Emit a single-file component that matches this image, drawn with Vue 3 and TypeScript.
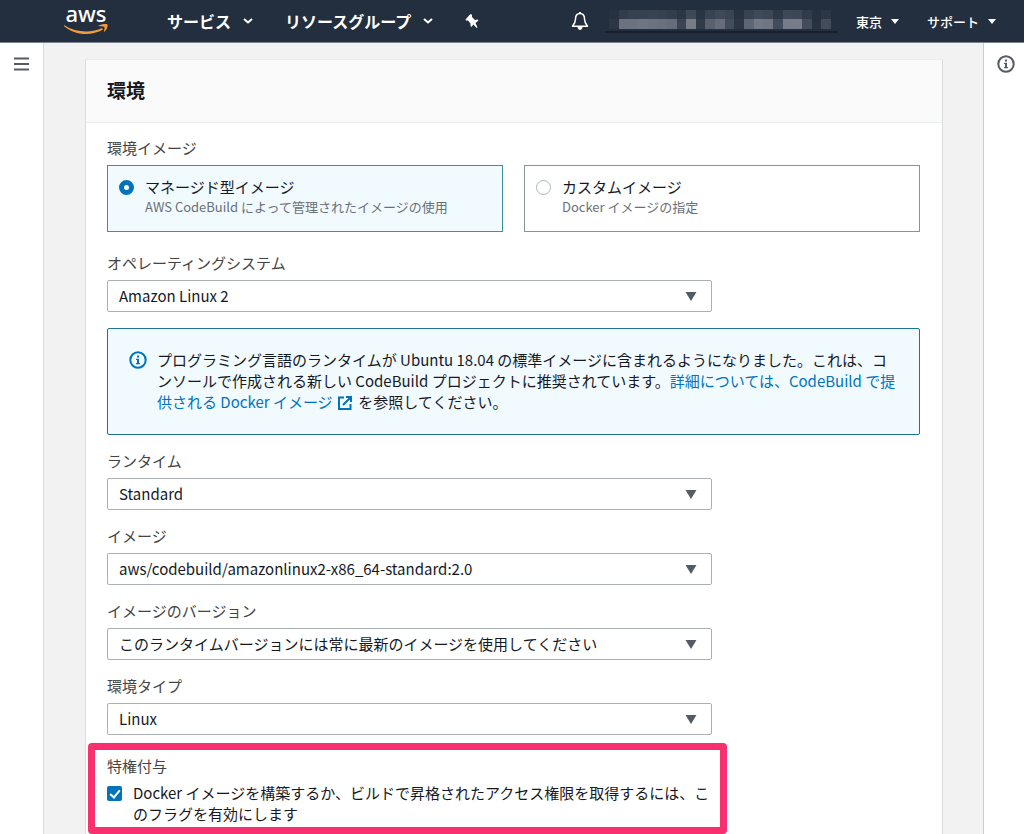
<script setup lang="ts">
import { ref } from 'vue'

interface Field {
  id: string
  label: string
  value: string
}

const imageKind = ref<string>('managed')
const privileged = ref<boolean>(true)

const osField: Field = { id: 'os', label: 'オペレーティングシステム', value: 'Amazon Linux 2' }

const fields: Field[] = [
  { id: 'runtime', label: 'ランタイム', value: 'Standard' },
  { id: 'image', label: 'イメージ', value: 'aws/codebuild/amazonlinux2-x86_64-standard:2.0' },
  {
    id: 'image-version',
    label: 'イメージのバージョン',
    value: 'このランタイムバージョンには常に最新のイメージを使用してください',
  },
  { id: 'env-type', label: '環境タイプ', value: 'Linux' },
]

// Pixelated account name: one shade per cell, two rows.
const maskTop: string[] = [
  '#27313f', '#323d4c', '#36404f', '#37414f', '#384251', '#36404f', '#333e4d', '#2c3645',
  '#3f4857', '#2a3443', '#384251', '#3f4857', '#3a4453', '#283241', '#384251', '#404958',
  '#3c4655', '#2e3847', '#3f4857', '#3c4655', '#303a49', '#253040', '#2c3645',
]
const maskBottom: string[] = [
  '#2c3645', '#6c727f', '#6c727f', '#6f7581', '#6c727f', '#6a707d', '#666c79', '#3a4453',
  '#777c88', '#303a49', '#59606e', '#666c79', '#434c5b', '#2c3645', '#5f6673', '#727884',
  '#6f7581', '#434c5b', '#777c88', '#777c88', '#434c5b', '#27313f', '#434c5b',
]
const maskCells: string[] = [...maskTop, ...maskBottom]
</script>

<template>
  <div class="page">
    <header class="topbar">
      <a class="logo" href="#" aria-label="aws">
        <svg width="46" height="42" viewBox="0 0 46 42">
          <text class="logo-text" x="23" y="22" text-anchor="middle">aws</text>
          <path d="M1 25 C13 33 29 33 39 28 L40 29.500 C29 36 12 36 1 26 Z" fill="#f59b38" />
          <path d="M35 26 C39 24 43 23.500 44.500 24.500 C45 27 43.500 30 41 32 C40.500 31.500 42 28 41.500 27 C40 26 37 26.800 35 26 Z" fill="#f59b38" />
        </svg>
      </a>
      <button class="nav services" type="button">
        サービス
        <svg class="chev" width="10" height="6" viewBox="0 0 10 6"><path d="M1 1 L5 4.500 L9 1" /></svg>
      </button>
      <button class="nav groups" type="button">
        リソースグループ
        <svg class="chev" width="10" height="6" viewBox="0 0 10 6"><path d="M1 1 L5 4.500 L9 1" /></svg>
      </button>
      <button class="icon-btn pin" type="button" aria-label="ピン">
        <svg width="14" height="16" viewBox="0 0 14 16">
          <path d="M6 1 L7 2 L7 4 L10 7 L12.500 6.500 L13.500 7.500 L10.500 10 L12.500 14.500 L11.800 15 L8.300 11.500 L6.500 14 L5.500 13 L5.500 10.500 L3 7.500 L1 7.500 L0.500 6.500 L5 1.500 Z" fill="#fff" />
        </svg>
      </button>
      <span class="spacer"></span>
      <button class="icon-btn bell" type="button" aria-label="通知">
        <svg width="18" height="20" viewBox="0 0 18 20">
          <path d="M9 2.500 C5.800 2.500 4.500 5 4.500 8 C4.500 11.500 3.500 13 1.500 15.200 H16.500 C14.500 13 13.500 11.500 13.500 8 C13.500 5 12.200 2.500 9 2.500 Z" fill="none" stroke="#fff" stroke-width="1.500" stroke-linejoin="round" />
          <path d="M9 1 V2.500" stroke="#fff" stroke-width="2" />
          <path d="M6.500 16 H11.500 C11 20 7 20 6.500 16 Z" fill="#fff" />
        </svg>
      </button>
      <button class="account" type="button" aria-label="アカウント">
        <span class="mask">
          <span v-for="(c, i) in maskCells" :key="i" :style="{ background: c }"></span>
        </span>
      </button>
      <button class="nav small region" type="button">
        東京
        <svg width="8" height="5" viewBox="0 0 8 5"><path d="M0 0 H8 L4 5 Z" fill="#fff" /></svg>
      </button>
      <button class="nav small" type="button">
        サポート
        <svg width="8" height="5" viewBox="0 0 8 5"><path d="M0 0 H8 L4 5 Z" fill="#fff" /></svg>
      </button>
    </header>

    <div class="shell">
      <aside class="rail left">
        <button class="icon-btn" type="button" aria-label="メニュー">
          <svg width="16" height="14" viewBox="0 0 16 14"><path d="M0 1.500 H15 M0 7 H15 M0 12.500 H15" stroke="#545b64" stroke-width="2" /></svg>
        </button>
      </aside>

      <main class="content">
        <section class="card">
          <h2 class="card-head">環境</h2>
          <div class="card-body">
            <div class="label">環境イメージ</div>
            <div class="tiles" role="radiogroup" aria-label="環境イメージ">
              <label class="tile" :class="{ selected: imageKind === 'managed' }">
                <input v-model="imageKind" class="radio" type="radio" name="kind" value="managed" />
                <span>
                  <span class="tile-title">マネージド型イメージ</span>
                  <span class="tile-desc">AWS CodeBuild によって管理されたイメージの使用</span>
                </span>
              </label>
              <label class="tile" :class="{ selected: imageKind === 'custom' }">
                <input v-model="imageKind" class="radio" type="radio" name="kind" value="custom" />
                <span>
                  <span class="tile-title">カスタムイメージ</span>
                  <span class="tile-desc">Docker イメージの指定</span>
                </span>
              </label>
            </div>

            <div class="field">
              <label class="label" :for="osField.id">{{ osField.label }}</label>
              <div class="select">
                <select :id="osField.id"><option>{{ osField.value }}</option></select>
                <svg class="caret" width="12" height="9" viewBox="0 0 12 9"><path d="M0.500 0 H11.500 L6 9 Z" fill="#545b64" /></svg>
              </div>
            </div>

            <div class="alert" role="note">
              <svg class="info" width="18" height="18" viewBox="0 0 18 18">
                <circle cx="9" cy="9" r="7.700" fill="none" stroke="#0073bb" stroke-width="2" />
                <path d="M8 4.500 H10 V6.500 H8 Z M7 7.700 H10 V12 H11 V13.300 H7 V12 H8 V9 H7 Z" fill="#0073bb" />
              </svg>
              <p>
                プログラミング言語のランタイムが Ubuntu 18.04 の標準イメージに含まれるようになりました。これは、コンソールで作成される新しい CodeBuild プロジェクトに推奨されています。<a href="#">詳細については、CodeBuild で提供される Docker イメージ
                  <svg class="ext" width="14" height="14" viewBox="0 0 14 14"><path d="M6 1.500 H1 V13 H12.500 V8 M8 1 H13 V6 M13 1 L5 9" fill="none" stroke="#0073bb" stroke-width="2" /></svg></a>
                を参照してください。
              </p>
            </div>

            <div v-for="f in fields" :key="f.id" class="field">
              <label class="label" :for="f.id">{{ f.label }}</label>
              <div class="select">
                <select :id="f.id"><option>{{ f.value }}</option></select>
                <svg class="caret" width="12" height="9" viewBox="0 0 12 9"><path d="M0.500 0 H11.500 L6 9 Z" fill="#545b64" /></svg>
              </div>
            </div>

            <div class="highlight">
              <div class="label">特権付与</div>
              <label class="check">
                <input v-model="privileged" class="box" type="checkbox" />
                <span>Docker イメージを構築するか、ビルドで昇格されたアクセス権限を取得するには、このフラグを有効にします</span>
              </label>
            </div>
          </div>
        </section>
      </main>

      <aside class="rail right">
        <button class="icon-btn" type="button" aria-label="情報">
          <svg width="18" height="18" viewBox="0 0 18 18">
            <circle cx="9" cy="9" r="7.700" fill="none" stroke="#545b64" stroke-width="2" />
            <path d="M8 4.500 H10 V6.500 H8 Z M7 7.700 H10 V12 H11 V13.300 H7 V12 H8 V9 H7 Z" fill="#545b64" />
          </svg>
        </button>
      </aside>
    </div>
  </div>
</template>

<style>
body {
  margin: 0;
  background: #f2f2f2;
}
</style>

<style scoped>
.page {
  height: 100vh;
  overflow: hidden;
  display: flex;
  flex-direction: column;
  background: #f2f2f2;
  color: #16191f;
  font-family: "Noto Sans CJK JP", sans-serif;
  font-size: 15px;
  line-height: 21px;
}
button,
select {
  font: inherit;
  color: inherit;
}
button {
  display: flex;
  align-items: center;
  padding: 0;
  border: 0;
  background: none;
}
.topbar {
  flex: none;
  display: flex;
  align-items: center;
  box-sizing: border-box;
  height: 43px;
  padding: 0 28px 0 63px;
  background: #232f3e;
  border-bottom: 1px solid #7d8391;
  color: #fff;
}
.logo {
  display: flex;
  margin-right: 58px;
}
.logo svg {
  overflow: visible;
}
.logo-text {
  fill: #fff;
  font-family: "Noto Sans", sans-serif;
  font-size: 22px;
  font-weight: 500;
}
.nav {
  gap: 12px;
  font-size: 16px;
  font-weight: 700;
  white-space: nowrap;
}
.services {
  margin-right: 32px;
}
.groups {
  margin-right: 32px;
}
.chev path {
  fill: none;
  stroke: #fff;
  stroke-width: 2;
}
.spacer {
  flex: 1;
}
.bell {
  margin-right: 16px;
}
.account {
  margin-right: 18px;
  padding: 0 7px 2px 4px;
  border-bottom: 2px solid #16202f;
}
.mask {
  display: grid;
  grid-template-columns: repeat(23, 1fr);
  grid-template-rows: 9px 10px;
  width: 222px;
}
.small {
  gap: 9px;
  font-size: 13px;
  font-weight: 500;
}
.region {
  margin-right: 28px;
}
.shell {
  flex: 1;
  min-height: 0;
  display: flex;
}
.rail {
  flex: none;
  display: flex;
  justify-content: center;
  align-items: flex-start;
  box-sizing: border-box;
  background: #fff;
}
.left {
  width: 44px;
  padding-top: 14px;
  border-right: 1px solid #d5dbdb;
}
.right {
  width: 41px;
  padding: 12px 0 0 4px;
  border-left: 1px solid #ccc;
}
.content {
  flex: 1;
  min-width: 0;
  padding: 16px 40px 0 41px;
}
.card {
  background: #fff;
  border: 1px solid #d9dcdc;
  border-top-color: #eaeded;
}
.card-head {
  margin: 0;
  padding: 19px 21px 21px;
  background: #fafafa;
  border-bottom: 1px solid #eaeded;
  font-size: 19px;
  line-height: 22px;
  font-weight: 700;
}
.card-body {
  padding: 14px 22px 30px 21px;
}
.label {
  display: block;
  margin-bottom: 6px;
  line-height: 22px;
  color: #444;
}
.tiles {
  display: grid;
  grid-template-columns: 1fr 1fr;
  gap: 21px;
  margin-bottom: 20px;
}
.tile {
  display: flex;
  align-items: flex-start;
  gap: 11px;
  box-sizing: border-box;
  min-height: 67px;
  padding: 11px;
  border: 1px solid #879596;
}
.tile.selected {
  background: #f1faff;
  border-color: #3a8fa0;
}
.tile-title,
.tile-desc {
  display: block;
}
.tile-title {
  line-height: 20px;
}
.tile-desc {
  font-size: 13px;
  line-height: 20px;
  color: #687078;
}
.radio {
  appearance: none;
  flex: none;
  box-sizing: border-box;
  width: 15px;
  height: 15px;
  margin: 3px 0 0;
  border: 1px solid #aab7b8;
  border-radius: 50%;
  background: #fff;
}
.radio:checked {
  border: 5px solid #0073bb;
}
.field {
  margin-bottom: 15px;
}
.select {
  display: grid;
  align-items: center;
  max-width: 605px;
}
.select > * {
  grid-area: 1 / 1;
}
.select select {
  appearance: none;
  box-sizing: border-box;
  width: 100%;
  height: 32px;
  padding: 0 40px 2px 11px;
  border: 1px solid #aab0b3;
  border-radius: 2px;
  background: #fff;
}
.caret {
  justify-self: end;
  margin-right: 15px;
  pointer-events: none;
}
.alert {
  display: flex;
  gap: 10px;
  margin: 16px 0 15px;
  padding: 20px 20px 22px 21px;
  border: 1px solid #1f7391;
  border-radius: 2px;
  background: #f1faff;
}
.info {
  flex: none;
  margin-top: 2px;
}
.alert p {
  margin: 0;
}
.alert a {
  color: #0073bb;
  text-decoration: none;
}
.ext {
  margin: 0 3px 0 2px;
  vertical-align: -2px;
}
.highlight {
  box-sizing: border-box;
  max-width: 639px;
  margin: -7px 0 0 -19px;
  padding: 5px 8px 3px 12px;
  border: 7px solid #f8306f;
  border-radius: 4px;
}
.highlight .label {
  margin-bottom: 5px;
}
.check {
  display: flex;
  align-items: flex-start;
  gap: 11px;
}
.box {
  appearance: none;
  flex: none;
  display: grid;
  place-items: center;
  width: 15px;
  height: 15px;
  margin: 4px 0 0;
  border-radius: 2px;
  background: #fff;
  outline: 1px solid #aab7b8;
  outline-offset: -1px;
}
.box:checked {
  background: #0073bb;
  outline: 0;
}
.box:checked::before {
  content: "";
  width: 4px;
  height: 8px;
  margin-bottom: 2px;
  border: solid #fff;
  border-width: 0 2px 2px 0;
  transform: rotate(40deg);
}
</style>
